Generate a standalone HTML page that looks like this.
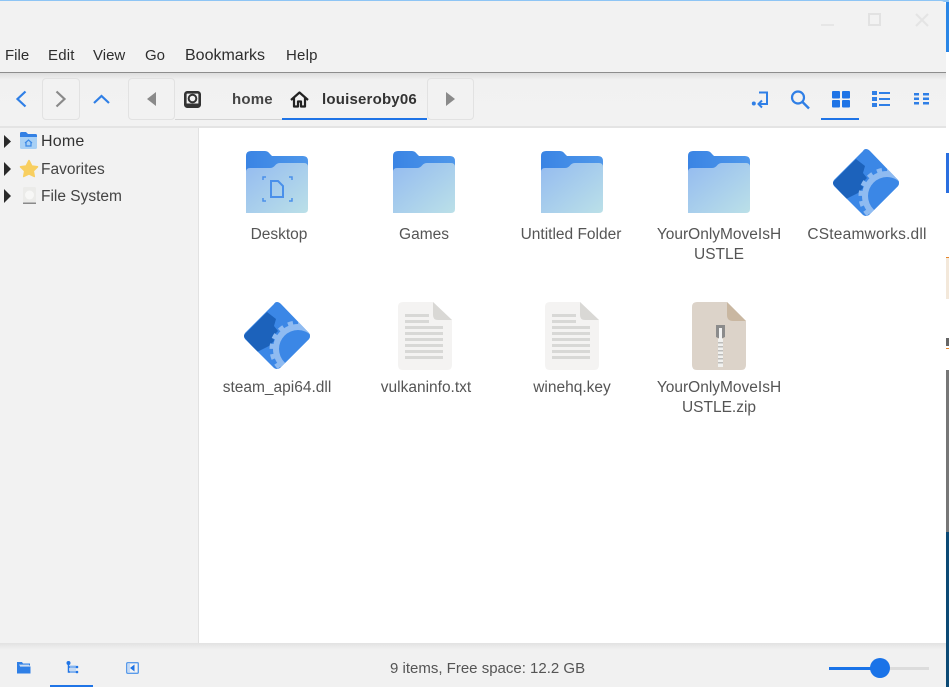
<!DOCTYPE html>
<html><head><meta charset="utf-8"><style>
html,body{margin:0;padding:0;width:949px;height:687px;overflow:hidden;background:#fff;font-family:"Liberation Sans",sans-serif}
.a{position:absolute}
.t{position:absolute;white-space:nowrap;color:#3c3c3c}
.m{font-size:15px;top:47px;color:#2e2e2e}
.l{position:absolute;width:146px;text-align:center;font-size:15.5px;line-height:20px;color:#555}
.s{font-size:15.5px;color:#444;left:41px}
svg{position:absolute;overflow:visible}
.b{position:absolute;box-sizing:border-box;border:1px solid #e2e2e2;border-radius:4px;background:#f2f2f2}
</style></head><body>
<svg width="0" height="0" style="position:absolute"><defs>
<linearGradient id="f" x1="0" y1="0" x2="1" y2="1"><stop offset="0" stop-color="#94bbf0"/><stop offset="1" stop-color="#bbe0e8"/></linearGradient>
<linearGradient id="k" x1="0" y1="0" x2="1" y2="0"><stop offset="0" stop-color="#3a84e4"/><stop offset="1" stop-color="#4e97ea"/></linearGradient>
<clipPath id="dia"><path d="M34 0Q36 0 38 2L66 31Q68 34 66 37L37 66Q34 68 31 66L2 37Q0 34 2 31L31 2Q32 0 34 0Z"/></clipPath>
<g id="folder"><path d="M0 5Q0 0 5 0H19Q22 0 24 3L26 5H57Q62 5 62 10V30H0Z" fill="url(#k)"/><path d="M0 21Q0 17 4 17H24Q27 17 29 14.5Q31 12 34 12H58Q62 12 62 16V58Q62 62 58 62H0Z" fill="url(#f)"/></g>
<g id="gear"><g clip-path="url(#dia)"><rect width="68" height="68" fill="#3b87e6"/><path d="M24 10L33 17L31 24L35 29L30 34L31 39L26 44L14 50L0 34Z" fill="#1c62bb"/><circle cx="55" cy="47" r="25" fill="#8fbbf1"/><circle cx="55" cy="47" r="26.5" fill="none" stroke="#8fbbf1" stroke-width="4" stroke-dasharray="5.2 5.2"/><circle cx="55" cy="47" r="19" fill="#3b87e6"/></g></g>
<g id="doc"><path d="M5 0H35L54 18V63Q54 68 49 68H5Q0 68 0 63V5Q0 0 5 0Z" fill="#f4f3f2"/><path d="M35 0L54 18H40Q35 18 35 13Z" fill="#d9d8d5"/><g fill="#d8d8d6"><rect x="7" y="12" width="24" height="3"/><rect x="7" y="18" width="24" height="3"/><rect x="7" y="24" width="38" height="3"/><rect x="7" y="30" width="38" height="3"/><rect x="7" y="36" width="38" height="3"/><rect x="7" y="42" width="38" height="3"/><rect x="7" y="48" width="38" height="3"/><rect x="7" y="54" width="38" height="3"/></g></g>
</defs></svg>

<!-- window chrome -->
<div class="a" style="left:946px;top:0;width:3px;height:52px;background:#2a86e6"></div>
<div class="a" style="left:946px;top:153px;width:3px;height:40px;background:#2a6fe0"></div>
<div class="a" style="left:946px;top:257px;width:3px;height:1px;background:#e8862a"></div>
<div class="a" style="left:946px;top:258px;width:3px;height:41px;background:#f3e8da"></div>
<div class="a" style="left:946px;top:338px;width:3px;height:8px;background:#666"></div>
<div class="a" style="left:946px;top:348px;width:3px;height:1px;background:#e8862a"></div>
<div class="a" style="left:946px;top:370px;width:3px;height:162px;background:#777"></div>
<div class="a" style="left:946px;top:532px;width:3px;height:155px;background:#0c4a75"></div>
<div class="a" style="left:0;top:0;width:949px;height:2px;background:#8ec5f5"></div>
<div class="a" style="left:0;top:1px;width:946px;height:71px;background:#f2f2f2;border-top-right-radius:5px"></div>
<div class="a" style="left:0;top:72px;width:946px;height:1px;background:#8d8d8d"></div>
<div class="a" style="left:0;top:73px;width:946px;height:54px;background:linear-gradient(#dedede,#f1f1f1 7px,#f2f2f2)"></div>
<div class="a" style="left:0;top:126px;width:946px;height:2px;background:#e4e4e4"></div>
<div class="a" style="left:0;top:128px;width:198px;height:516px;background:#f2f2f2"></div>
<div class="a" style="left:198px;top:128px;width:1px;height:516px;background:#e2e2e2"></div>
<div class="a" style="left:0;top:643px;width:946px;height:44px;background:linear-gradient(#e2e2e2,#f1f1f1 7px,#f1f1f1)"></div>

<!-- window buttons -->
<div class="a" style="left:821px;top:24px;width:13px;height:2px;background:#e6e6e6"></div>
<div class="a" style="left:868px;top:13px;width:13px;height:13px;box-sizing:border-box;border:2px solid #e2e2e2"></div>
<svg style="left:916px;top:14px" width="13" height="13"><path d="M0 0L12 12M12 0L0 12" stroke="#e4e4e4" stroke-width="2" fill="none"/></svg>

<!-- menu -->
<div class="t m" style="left:5px">File</div>
<div class="t m" style="left:48px;letter-spacing:.2px">Edit</div>
<div class="t m" style="left:93px">View</div>
<div class="t m" style="left:145px">Go</div>
<div class="t m" style="left:185px;font-size:16px;top:47px">Bookmarks</div>
<div class="t m" style="left:286px;letter-spacing:.2px">Help</div>

<!-- nav -->
<svg style="left:16px;top:91px" width="10" height="16"><path d="M9.5 .5L1.5 8L9.5 15.5" stroke="#2f7fe6" stroke-width="2.2" fill="none"/></svg>
<div class="b" style="left:42px;top:78px;width:38px;height:42px"></div>
<svg style="left:56px;top:91px" width="10" height="16"><path d="M.5 .5L8.5 8L.5 15.5" stroke="#8a8a8a" stroke-width="2.2" fill="none"/></svg>
<svg style="left:93px;top:94px" width="17" height="10"><path d="M1 9L8.5 2L16 9" stroke="#2f7fe6" stroke-width="2.2" fill="none"/></svg>
<div class="b" style="left:128px;top:78px;width:47px;height:42px"></div>
<svg style="left:147px;top:92px" width="9" height="14"><path d="M9 0V14L0 7Z" fill="#8a8a8a"/></svg>
<div class="a" style="left:175px;top:119px;width:107px;height:1px;background:#d4d4d4"></div>
<div class="a" style="left:282px;top:118px;width:145px;height:2px;background:#1f74e6"></div>
<div class="b" style="left:427px;top:78px;width:47px;height:42px"></div>
<svg style="left:446px;top:92px" width="9" height="14"><path d="M0 0V14L9 7Z" fill="#8a8a8a"/></svg>
<svg style="left:184px;top:91px" width="17" height="17"><rect x="1.300" y="1.300" width="14.400" height="14.400" rx="2" fill="none" stroke="#333" stroke-width="2.600"/><circle cx="8.500" cy="7.500" r="3.800" fill="none" stroke="#333" stroke-width="2"/><rect x="2" y="12.500" width="13" height="3" fill="#333"/></svg>
<div class="t" style="left:232px;top:91px;font-size:15px;font-weight:bold;color:#444;letter-spacing:.2px">home</div>
<svg style="left:290px;top:91px" width="19" height="17"><path d="M1 9L9.5 1.5L18 9M4 7V15.5H8V10.5H11V15.5H15V7" fill="none" stroke="#222" stroke-width="2.2" stroke-linejoin="round"/></svg>
<div class="t" style="left:322px;top:91px;font-size:15px;font-weight:bold;color:#333;letter-spacing:.2px">louiseroby06</div>

<!-- right toolbar -->
<svg style="left:751px;top:90px" width="18" height="17"><circle cx="2.800" cy="13.500" r="2" fill="#2f7fe6"/><path d="M8 2.500H16V14H7.500M11 10.500L7.500 14L11 17.500" fill="none" stroke="#2f7fe6" stroke-width="2"/></svg>
<svg style="left:790px;top:90px" width="20" height="19"><circle cx="8" cy="7.500" r="6" fill="none" stroke="#2f7fe6" stroke-width="2.200"/><path d="M12.500 12L19 18.500" stroke="#2f7fe6" stroke-width="2.400"/></svg>
<svg style="left:832px;top:91px" width="18" height="17" fill="#1f74e6"><rect width="8" height="7.500" rx="1"/><rect x="10" width="8" height="7.500" rx="1"/><rect y="9" width="8" height="7.500" rx="1"/><rect x="10" y="9" width="8" height="7.500" rx="1"/></svg>
<div class="a" style="left:821px;top:118px;width:38px;height:2px;background:#1f74e6"></div>
<svg style="left:872px;top:91px" width="18" height="16" fill="#2f7fe6"><rect width="5" height="4"/><rect y="6" width="5" height="4"/><rect y="12" width="5" height="4"/><rect x="7" y="1" width="11" height="2"/><rect x="7" y="7" width="11" height="2"/><rect x="7" y="13" width="11" height="2"/></svg>
<svg style="left:914px;top:93px" width="15" height="12" fill="#2f7fe6"><rect width="5" height="2.500"/><rect x="9" width="6" height="2.500"/><rect y="4.500" width="5" height="2.500"/><rect x="9" y="4.500" width="6" height="2.500"/><rect y="9" width="5" height="2.500"/><rect x="9" y="9" width="6" height="2.500"/></svg>

<!-- sidebar -->
<svg style="left:4px;top:135px" width="7" height="13"><path d="M0 0V13L7 6.500Z" fill="#2a2a2a"/></svg>
<svg style="left:4px;top:162px" width="7" height="14"><path d="M0 0V14L7 7Z" fill="#2a2a2a"/></svg>
<svg style="left:4px;top:189px" width="7" height="14"><path d="M0 0V14L7 7Z" fill="#2a2a2a"/></svg>
<svg style="left:20px;top:132px" width="17" height="17"><path d="M0 1.500Q0 0 1.500 0H6L8 2H15.500Q17 2 17 3.500V6H0Z" fill="#3280e4"/><path d="M0 5H17V15.500Q17 17 15.500 17H1.500Q0 17 0 15.500Z" fill="#a8d0f5"/><path d="M5 11L8.500 8L12 11M6 10.500V14H11V10.500" fill="none" stroke="#3a88e6" stroke-width="1.200"/></svg>
<div class="t s" style="top:133px;color:#333;font-size:16px;letter-spacing:.2px">Home</div>
<svg style="left:19px;top:159px" width="20" height="19"><path d="M10 1.500L12.800 7L18.500 7.800L14.300 12L15.300 17.500L10 15L4.700 17.500L5.700 12L1.500 7.800L7.200 7Z" fill="#f8cf60" stroke="#f8cf60" stroke-width="1.500" stroke-linejoin="round"/></svg>
<div class="t s" style="top:161px">Favorites</div>
<svg style="left:23px;top:187px" width="13" height="17"><rect width="13" height="15.500" rx="1.500" fill="#ebebe9"/><circle cx="6.500" cy="8" r="4.500" fill="#f7f7f6"/><rect y="15.500" width="13" height="1.500" fill="#8a8a8a"/></svg>
<div class="t s" style="top:188px">File System</div>

<!-- file grid row 1 -->
<svg style="left:246px;top:151px" width="62" height="63"><use href="#folder"/><g fill="none" stroke="#4a90ea"><path d="M17 29V26H20M43 26H46V29M17 47V50H20M46 47V50H43" stroke-width="1.500"/><path d="M25 30H32L37 35V46H25Z" stroke-width="2"/></g></svg>
<svg style="left:393px;top:151px" width="62" height="63"><use href="#folder"/></svg>
<svg style="left:541px;top:151px" width="62" height="63"><use href="#folder"/></svg>
<svg style="left:688px;top:151px" width="62" height="63"><use href="#folder"/></svg>
<svg style="left:832px;top:149px" width="68" height="68"><use href="#gear"/></svg>
<div class="l" style="left:206px;top:225px">Desktop</div>
<div class="l" style="left:351px;top:225px">Games</div>
<div class="l" style="left:498px;top:225px">Untitled Folder</div>
<div class="l" style="left:646px;top:225px">YourOnlyMoveIsH<br>USTLE</div>
<div class="l" style="left:794px;top:225px;letter-spacing:.2px">CSteamworks.dll</div>

<!-- row 2 -->
<svg style="left:243px;top:302px" width="68" height="68"><use href="#gear"/></svg>
<svg style="left:398px;top:302px" width="54" height="68"><use href="#doc"/></svg>
<svg style="left:545px;top:302px" width="54" height="68"><use href="#doc"/></svg>
<svg style="left:692px;top:302px" width="54" height="68"><path d="M5 0H35L54 19V63Q54 68 49 68H5Q0 68 0 63V5Q0 0 5 0Z" fill="#dcd3c9"/><path d="M35 0L54 19H41Q35 19 35 13Z" fill="#c9b7a1"/><path d="M24 23H33V35L31 36H26L24 35Z" fill="#8b8b8b"/><rect x="27" y="26" width="3" height="11" fill="#f2f2f2"/><rect x="26" y="37" width="5" height="28" fill="#f1f1ef"/><g fill="#bdbdbb"><rect x="26" y="40" width="5" height="1.500"/><rect x="26" y="44" width="5" height="1.500"/><rect x="26" y="48" width="5" height="1.500"/><rect x="26" y="52" width="5" height="1.500"/><rect x="26" y="56" width="5" height="1.500"/><rect x="26" y="60" width="5" height="1.500"/></g></svg>
<div class="l" style="left:204px;top:378px">steam_api64.dll</div>
<div class="l" style="left:353px;top:378px">vulkaninfo.txt</div>
<div class="l" style="left:499px;top:378px">winehq.key</div>
<div class="l" style="left:646px;top:378px">YourOnlyMoveIsH<br>USTLE.zip</div>

<!-- status bar -->
<svg style="left:17px;top:662px" width="14" height="12"><path d="M0 0H5L6 1.500H13V3.500H3V11.500H0Z" fill="#2f7fe6"/><path d="M1.500 4.500H13.500V11.500H1.500Z" fill="#2f7fe6"/><path d="M2 3H12" stroke="#a6c9f3"/></svg>
<svg style="left:66px;top:661px" width="13" height="13"><circle cx="2.500" cy="2" r="2" fill="#1f74e6"/><path d="M2.500 2V11H11M2.500 6H11" stroke="#1f74e6" stroke-width="1.500" fill="none"/><rect x="4" y="4" width="6" height="8" fill="#a6c9f3" opacity=".6"/><circle cx="11" cy="6" r="1.300" fill="#1f74e6"/><circle cx="11" cy="11" r="1.300" fill="#1f74e6"/></svg>
<div class="a" style="left:50px;top:685px;width:43px;height:2px;background:#1f74e6"></div>
<svg style="left:126px;top:662px" width="13" height="12"><rect x=".7" y=".7" width="11.600" height="10.600" rx="1" fill="#f4f4f4" stroke="#5a9bea" stroke-width="1.400"/><rect x="2" y="2" width="2" height="8" fill="#c5daf5"/><path d="M8.500 2.500V9.500L4 6Z" fill="#1f74e6"/></svg>
<div class="t" style="left:390px;top:660px;font-size:15px;color:#555">9 items, Free space: 12.2 GB</div>
<div class="a" style="left:829px;top:667px;width:50px;height:3px;background:#1a73e8"></div>
<div class="a" style="left:879px;top:667px;width:50px;height:3px;background:#dcdcdc"></div>
<div class="a" style="left:870px;top:658px;width:20px;height:20px;border-radius:50%;background:#1a73e8"></div>
</body></html>
